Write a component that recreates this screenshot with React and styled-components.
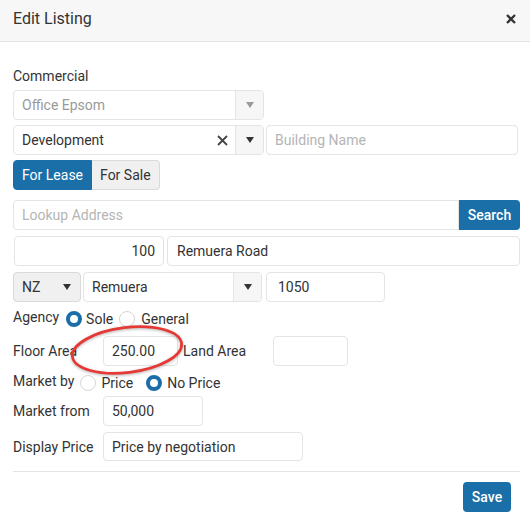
import React from "react";
import styled, { createGlobalStyle } from "styled-components";

const BLUE = "#1b6fa8";

const Global = createGlobalStyle`
  html, body { margin: 0; padding: 0; background: #fff; }
  body { font-family: Roboto, "Liberation Sans", Arial, sans-serif; color: #333; }
  * { box-sizing: border-box; }
`;

const Modal = styled.div`
  position: relative;
  width: 530px;
  height: 524px;
  background: #fff;
  overflow: hidden;
`;

const Header = styled.div`
  height: 42px;
  display: flex;
  align-items: center;
  justify-content: space-between;
  padding: 0 14px 0 13px;
  background: #f7f7f7;
  border-bottom: 1px solid #e3e3e3;
`;

const Title = styled.div`
  font-size: 16px;
  color: #333;
  margin-top: -4px;
`;

const Close = styled.svg`
  margin-top: -3px;
`;

const Body = styled.div`
  display: flex;
  flex-direction: column;
  padding: 0 10px 0 13px;
`;

const Label = styled.div`
  font-size: 14px;
  line-height: 20px;
  color: #333;
  margin-top: ${(p) => p.$mt || 0}px;
`;

const Row = styled.div`
  display: flex;
  align-items: ${(p) => p.$align || "stretch"};
  margin-top: ${(p) => p.$mt || 0}px;
  height: ${(p) => p.$h || 30}px;
`;

const Input = styled.input`
  width: ${(p) => p.$w}px;
  height: ${(p) => p.$h || 30}px;
  flex: ${(p) => (p.$w ? "0 0 auto" : "1 1 auto")};
  border: 1px solid #e4e4e4;
  border-radius: ${(p) => p.$radius || "4px"};
  padding: 0 ${(p) => p.$pr || 8}px 0 ${(p) => p.$pl || 8}px;
  font-family: Roboto, "Liberation Sans", Arial, sans-serif;
  font-size: 14px;
  color: #333;
  text-align: ${(p) => p.$align || "left"};
  background: #fff;
  outline: none;
  margin-left: ${(p) => p.$ml || 0}px;
  &::placeholder { color: #b5b5b5; }
`;

const Select = styled.div`
  width: ${(p) => p.$w}px;
  height: 30px;
  flex: 0 0 auto;
  display: flex;
  border: 1px solid ${(p) => (p.$gray ? "#d9d9d9" : "#e4e4e4")};
  border-radius: 4px;
  background: ${(p) => (p.$gray ? "#f0f0f0" : "#fff")};
  margin-left: ${(p) => p.$ml || 0}px;
  overflow: hidden;
`;

const SelectText = styled.div`
  flex: 1;
  display: flex;
  align-items: center;
  padding-left: 8px;
  font-size: 14px;
  color: ${(p) => (p.$muted ? "#9a9a9a" : "#333")};
`;

const Clear = styled.div`
  display: flex;
  align-items: center;
  padding-right: 7px;
`;

const Arrow = styled.div`
  width: ${(p) => p.$w || 28}px;
  display: flex;
  align-items: center;
  justify-content: center;
  background: ${(p) => (p.$plain ? "transparent" : "#f6f6f6")};
  border-left: ${(p) => (p.$plain ? "none" : "1px solid #e6e6e6")};
  &::after {
    content: "";
    border-left: 4px solid transparent;
    border-right: 4px solid transparent;
    border-top: 6px solid ${(p) => (p.$muted ? "#999" : "#333")};
  }
`;

const ToggleGroup = styled.div`
  display: flex;
  margin-top: 5px;
  height: 30px;
`;

const Toggle = styled.div`
  display: flex;
  align-items: center;
  padding: 0 ${(p) => p.$px}px;
  font-size: 14px;
  background: ${(p) => (p.$active ? BLUE : "#f0f0f0")};
  color: ${(p) => (p.$active ? "#fff" : "#333")};
  border: 1px solid ${(p) => (p.$active ? BLUE : "#dadada")};
  border-radius: ${(p) => (p.$active ? "4px 0 0 4px" : "0 4px 4px 0")};
  border-left-width: ${(p) => (p.$active ? 1 : 0)}px;
`;

const Button = styled.button`
  height: 30px;
  width: ${(p) => p.$w}px;
  border: none;
  border-radius: ${(p) => p.$radius || "4px"};
  background: ${BLUE};
  color: #fff;
  font-family: Roboto, "Liberation Sans", Arial, sans-serif;
  font-size: 14px;
  font-weight: 500;
  padding: 0;
`;

const FieldLabel = styled.div`
  width: ${(p) => p.$w}px;
  flex: 0 0 auto;
  font-size: 14px;
  color: #333;
  margin-left: ${(p) => p.$ml || 0}px;
  align-self: ${(p) => p.$self || "center"};
  line-height: 20px;
`;

const RadioGroup = styled.div`
  display: flex;
  align-items: center;
  align-self: flex-end;
  height: 20px;
  margin-left: ${(p) => p.$ml}px;
`;

const RadioItem = styled.div`
  display: flex;
  align-items: center;
  font-size: 14px;
  color: #333;
  margin-right: ${(p) => p.$mr || 0}px;
`;

const Circle = styled.span`
  width: 16px;
  height: 16px;
  border-radius: 50%;
  margin-right: ${(p) => p.$gap || 4}px;
  border: ${(p) => (p.$on ? `4px solid ${BLUE}` : "1px solid #d4d4d4")};
  background: #fff;
`;

const Footer = styled.div`
  margin-top: 10px;
  border-top: 1px solid #e3e3e3;
  padding: 10px 9px 0 0;
  display: flex;
  justify-content: flex-end;
`;

const Annotation = styled.svg`
  position: absolute;
  left: 60px;
  top: 313px;
  filter: drop-shadow(0 1px 1.5px rgba(0, 0, 0, 0.3));
`;

function Radio({ on, children, mr, gap }) {
  return (
    <RadioItem $mr={mr}>
      <Circle $on={on} $gap={gap} />
      {children}
    </RadioItem>
  );
}

export default function App() {
  return (
    <Modal>
      <Global />
      <Header>
        <Title>Edit Listing</Title>
        <Close width="10" height="10" viewBox="0 0 10 10">
          <path d="M1 1 L9 9 M9 1 L1 9" stroke="#333" strokeWidth="2.3" />
        </Close>
      </Header>
      <Body>
        <Label $mt={24}>Commercial</Label>
        <Row $mt={4}>
          <Select $w={251}>
            <SelectText $muted>Office Epsom</SelectText>
            <Arrow $muted />
          </Select>
        </Row>
        <Row $mt={5}>
          <Select $w={251}>
            <SelectText>Development</SelectText>
            <Clear>
              <svg width="11" height="11" viewBox="0 0 11 11">
                <path d="M1 1 L10 10 M10 1 L1 10" stroke="#444" strokeWidth="1.8" />
              </svg>
            </Clear>
            <Arrow />
          </Select>
          <Input $ml={2} $w={252} placeholder="Building Name" />
        </Row>
        <ToggleGroup>
          <Toggle $active $px={8}>For Lease</Toggle>
          <Toggle $px={8}>For Sale</Toggle>
        </ToggleGroup>
        <Row $mt={10}>
          <Input placeholder="Lookup Address" $radius="4px 0 0 4px" />
          <Button $w={61} $radius="0 4px 4px 0">Search</Button>
        </Row>
        <Row $mt={6}>
          <Input $w={150} $ml={1} $align="right" $pr={8} defaultValue="100" />
          <Input $ml={3} $pl={9} defaultValue="Remuera Road" />
        </Row>
        <Row $mt={6}>
          <Select $w={68} $gray>
            <SelectText>NZ</SelectText>
            <Arrow $plain $w={26} />
          </Select>
          <Select $w={179} $ml={2}>
            <SelectText>Remuera</SelectText>
            <Arrow />
          </Select>
          <Input $w={119} $ml={4} $pl={11} defaultValue="1050" />
        </Row>
        <Row $mt={5} $h={22}>
          <FieldLabel $self="flex-start">Agency</FieldLabel>
          <RadioGroup $ml={7}>
            <Radio on mr={6} gap={4}>Sole</Radio>
            <Radio gap={6}>General</Radio>
          </RadioGroup>
        </Row>
        <Row $mt={7} $align="center">
          <FieldLabel $w={90}>Floor Area</FieldLabel>
          <Input $w={75} defaultValue="250.00" />
          <FieldLabel $w={90} $ml={5}>Land Area</FieldLabel>
          <Input $w={75} />
        </Row>
        <Row $mt={5} $h={22}>
          <FieldLabel $self="flex-start">Market by</FieldLabel>
          <RadioGroup $ml={6}>
            <Radio mr={13} gap={5}>Price</Radio>
            <Radio on gap={5}>No Price</Radio>
          </RadioGroup>
        </Row>
        <Row $mt={3} $align="center">
          <FieldLabel $w={90}>Market from</FieldLabel>
          <Input $w={100} defaultValue="50,000" />
        </Row>
        <Row $mt={6} $align="center" $h={29}>
          <FieldLabel $w={90}>Display Price</FieldLabel>
          <Input $w={200} $h={29} defaultValue="Price by negotiation" />
        </Row>
        <Footer>
          <Button $w={48}>Save</Button>
        </Footer>
      </Body>
      <Annotation width="140" height="75" viewBox="0 0 140 75">
        <ellipse
          cx="67"
          cy="37"
          rx="55"
          ry="22.5"
          fill="none"
          stroke="#e53935"
          strokeWidth="2.7"
          transform="rotate(-7 67 37)"
        />
      </Annotation>
    </Modal>
  );
}
